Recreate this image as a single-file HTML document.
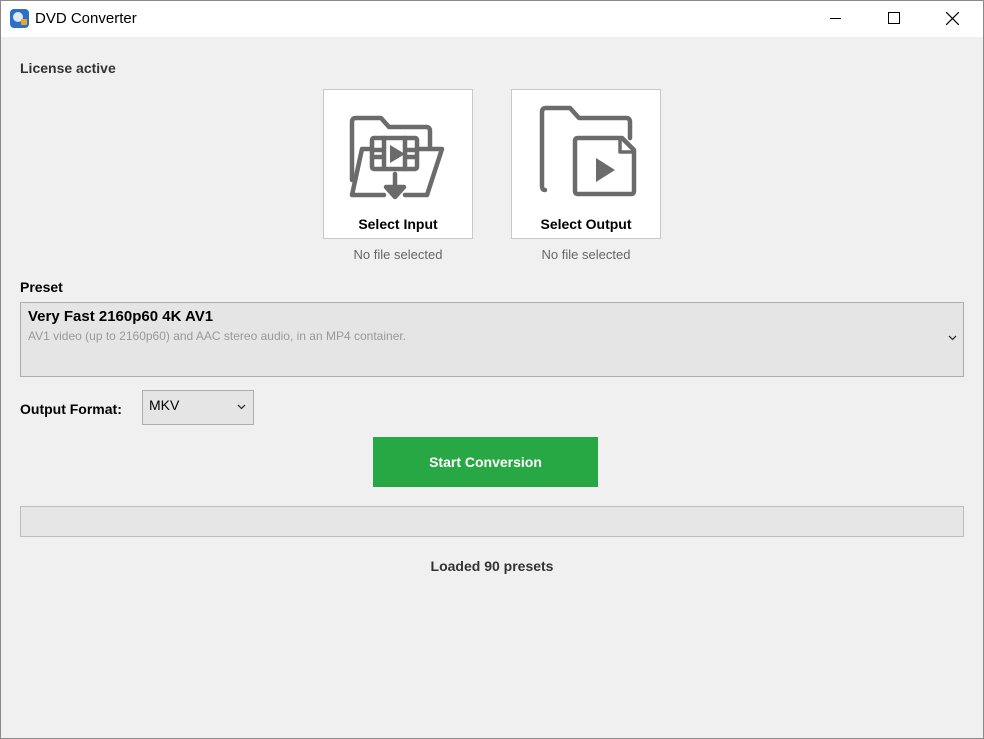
<!DOCTYPE html>
<html><head><style>
*{margin:0;padding:0;box-sizing:border-box}
body{width:984px;height:739px;background:#f0f0f0;font-family:"Liberation Sans",sans-serif;position:relative;overflow:hidden}
.abs{position:absolute}
.title{left:0;top:0;width:984px;height:37px;background:#fff}
.b{font-weight:bold}
.box{background:#fff;border:1px solid #c8c8c8;width:150px;height:150px}
</style></head><body>
<div class="abs title">
 <div class="abs" style="left:10px;top:9px;width:19px;height:19px;border-radius:4px;background:#2a6fc9"><div class="abs" style="left:3px;top:3px;width:10px;height:10px;border-radius:50%;background:#dfe9f7"></div><div class="abs" style="left:11px;top:10px;width:6px;height:6px;background:#f2a51c;border-radius:1px"></div></div>
 <div class="abs" style="left:35px;top:10px;font-size:15px;color:#000">DVD Converter</div>
 <div class="abs" style="left:830px;top:18px;width:11px;height:1px;background:#000"></div>
 <div class="abs" style="left:888px;top:12px;width:12px;height:12px;border:1px solid #000"></div>
 <svg class="abs" style="left:946px;top:12px" width="13" height="13"><path d="M0 0L13 13M13 0L0 13" stroke="#000" stroke-width="1.2"/></svg>
</div>
<div class="abs b" style="left:20px;top:60px;font-size:14px;color:#333">License active</div>
<div class="abs box" style="left:323px;top:89px"></div>
<div class="abs box" style="left:511px;top:89px"></div>
<svg class="abs" style="left:0;top:0" width="984" height="739" fill="none" stroke="#6b6b6b" stroke-width="4.5" stroke-linejoin="round" stroke-linecap="round">
 <path d="M352 180V122q0-4 4-4h25l8 9h37q4 0 4 4v16"/>
 <path d="M362 149l-10 46h32M405 195h22l15-46H362"/>
 <rect x="372" y="138" width="45" height="31" rx="2" fill="#fff"/>
 <path d="M384 138v31M405 138v31M372 150h12M372 157h12M405 150h12M405 157h12"/>
 <path d="M395 174v20"/>
 <path d="M386 187l9 10 9-10z" fill="#6b6b6b"/>
 <path d="M545 190q-3 0-3-4V112q0-4 4-4h24l9 10h47q4 0 4 4v16"/>
 <path d="M578 138h44l12 12v41q0 3-3 3h-53q-3 0-3-3v-50q0-3 3-3z" fill="#fff"/>
 <path d="M620 140v12h12" stroke-width="3.5"/>
</svg>
<svg class="abs" style="left:0;top:0" width="984" height="739"><path d="M390 145l15 9-15 9z" fill="#6b6b6b"/><path d="M596 158l19 12-19 12z" fill="#6b6b6b"/></svg>
<div class="abs b" style="left:323px;top:216px;width:150px;text-align:center;font-size:14px;color:#000">Select Input</div>
<div class="abs b" style="left:511px;top:216px;width:150px;text-align:center;font-size:14px;color:#000">Select Output</div>
<div class="abs" style="left:323px;top:247px;width:150px;text-align:center;font-size:13px;color:#666">No file selected</div>
<div class="abs" style="left:511px;top:247px;width:150px;text-align:center;font-size:13px;color:#666">No file selected</div>
<div class="abs b" style="left:20px;top:279px;font-size:14px;color:#000">Preset</div>
<div class="abs" style="left:20px;top:302px;width:944px;height:75px;background:#e5e5e5;border:1px solid #adadad"></div>
<div class="abs b" style="left:28px;top:308px;font-size:15px;color:#000">Very Fast 2160p60 4K AV1</div>
<div class="abs" style="left:28px;top:329px;font-size:12px;color:#999">AV1 video (up to 2160p60) and AAC stereo audio, in an MP4  container.</div>
<svg class="abs" style="left:948px;top:335px" width="9" height="6"><path d="M1 1l3.5 3.5L8 1" stroke="#333" fill="none" stroke-width="1.3"/></svg>
<div class="abs b" style="left:20px;top:401px;font-size:14px;color:#000">Output Format:</div>
<div class="abs" style="left:142px;top:390px;width:112px;height:35px;background:#e5e5e5;border:1px solid #adadad"></div>
<div class="abs" style="left:149px;top:397px;font-size:14px;color:#000">MKV</div>
<svg class="abs" style="left:237px;top:404px" width="9" height="6"><path d="M1 1l3.5 3.5L8 1" stroke="#333" fill="none" stroke-width="1.3"/></svg>
<div class="abs b" style="left:373px;top:437px;width:225px;height:50px;background:#28a745;color:#fff;font-size:14px;text-align:center;line-height:50px">Start Conversion</div>
<div class="abs" style="left:20px;top:506px;width:944px;height:31px;background:#e6e6e6;border:1px solid #bcbcbc"></div>
<div class="abs b" style="left:0;top:558px;width:984px;text-align:center;font-size:14px;color:#333">Loaded 90 presets</div>
<div class="abs" style="left:0;top:0;width:984px;height:739px;border:1px solid #8a8a8a;pointer-events:none"></div>
</body></html>
